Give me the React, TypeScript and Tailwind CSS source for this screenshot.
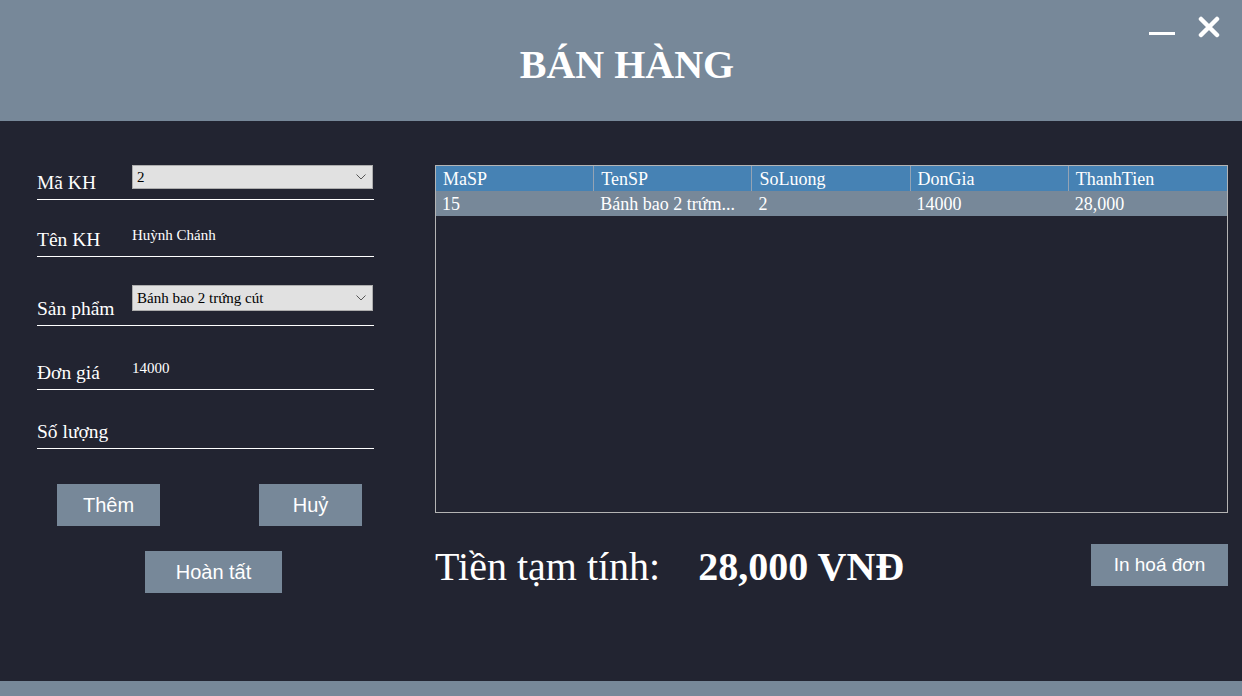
const serif = { fontFamily: '"Liberation Serif", "Times New Roman", serif' };
const sans = { fontFamily: '"Liberation Sans", Arial, sans-serif' };

const Combo = ({ value, mb, h }: { value: string; mb: string; h: string }) => (
  <div
    className={`flex ${h} w-[241px] items-center justify-between self-end border border-[#adadad] bg-[#e1e1e1] pl-[4px] pr-[6px] text-[15px] leading-none text-black ${mb}`}
    style={serif}
  >
    <span>{value}</span>
    <svg width="10" height="6" viewBox="0 0 10 6">
      <path d="M0.5 0.5 L5 5 L9.5 0.5" fill="none" stroke="#555" strokeWidth="1" />
    </svg>
  </div>
);

const Row = ({
  label,
  h,
  children,
}: {
  label: string;
  h: string;
  children?: React.ReactNode;
}) => (
  <div className={`flex ${h} items-end border-b border-white`}>
    <span className="w-[95px] pb-[7px] text-[19.5px] leading-none text-white" style={serif}>
      {label}
    </span>
    {children}
  </div>
);

const cols = ["MaSP", "TenSP", "SoLuong", "DonGia", "ThanhTien"];
const row = ["15", "Bánh bao 2 trứm...", "2", "14000", "28,000"];

export default function App() {
  return (
    <div className="flex h-[696px] w-full flex-col overflow-hidden bg-[#222431]">
      <header className="relative flex h-[121px] shrink-0 justify-center bg-[#778899] pl-[12px] pt-[45px]">
        <h1 className="text-[40px] font-bold leading-none text-white" style={serif}>
          BÁN HÀNG
        </h1>
        <svg className="absolute left-[1149px] top-[31px]" width="27" height="5" viewBox="0 0 27 5">
          <rect x="0" y="1" width="26" height="3" fill="white" />
        </svg>
        <svg className="absolute left-[1198px] top-[16px]" width="22" height="22" viewBox="0 0 22 22">
          <path d="M3 3 L19 19 M19 3 L3 19" stroke="white" strokeWidth="4.5" strokeLinecap="round" />
        </svg>
      </header>

      <main className="flex flex-1 pl-[37px] pr-[14px]">
        <section className="flex w-[337px] flex-col pt-[29px]">
          <Row label="Mã KH" h="h-[50px]">
            <Combo value="2" mb="mb-[10px]" h="h-[24px]" />
          </Row>
          <Row label="Tên KH" h="h-[57px]">
            <span className="mb-[13px] text-[15px] leading-none text-white" style={serif}>
              Huỳnh Chánh
            </span>
          </Row>
          <Row label="Sản phẩm" h="h-[69px]">
            <Combo value="Bánh bao 2 trứng cút" mb="mb-[14px]" h="h-[26px]" />
          </Row>
          <Row label="Đơn giá" h="h-[64px]">
            <span className="mb-[13px] text-[15px] leading-none text-white" style={serif}>
              14000
            </span>
          </Row>
          <Row label="Số lượng" h="h-[59px]" />

          <div className="mt-[35px] flex gap-[99px] pl-[20px]">
            <button className="h-[42px] w-[103px] bg-[#778899] text-[20px] text-white" style={sans}>
              Thêm
            </button>
            <button className="h-[42px] w-[103px] bg-[#778899] text-[20px] text-white" style={sans}>
              Huỷ
            </button>
          </div>
          <button
            className="ml-[108px] mt-[25px] h-[42px] w-[137px] bg-[#778899] text-[20px] text-white"
            style={sans}
          >
            Hoàn tất
          </button>
        </section>

        <section className="ml-[61px] flex flex-1 flex-col pt-[44px]">
          <div className="h-[348px] border border-[#b4b4b4]">
            <div className="grid h-[25px] grid-cols-5 bg-[#4682b4]">
              {cols.map((c, i) => (
                <div
                  key={c}
                  className={`flex items-center pl-[7px] text-[18px] leading-none text-white ${
                    i < 4 ? "border-r border-[#94a3b4]" : ""
                  }`}
                  style={serif}
                >
                  {c}
                </div>
              ))}
            </div>
            <div className="grid h-[25px] grid-cols-5 bg-[#778899]">
              {row.map((c, i) => (
                <div
                  key={i}
                  className="flex items-center whitespace-nowrap pl-[6px] text-[18px] leading-none text-white"
                  style={serif}
                >
                  {c}
                </div>
              ))}
            </div>
          </div>

          <div className="mt-[31px] flex h-[42px] items-center">
            <span className="pt-[3px] text-[40px] leading-none text-white" style={serif}>
              Tiền tạm tính:
            </span>
            <span className="ml-[38px] pt-[3px] text-[40px] font-bold leading-none text-white" style={serif}>
              28,000 VNĐ
            </span>
            <button
              className="ml-auto h-[42px] w-[137px] bg-[#778899] text-[19px] text-white"
              style={sans}
            >
              In hoá đơn
            </button>
          </div>
        </section>
      </main>

      <footer className="h-[15px] shrink-0 bg-[#778899]" />
    </div>
  );
}
